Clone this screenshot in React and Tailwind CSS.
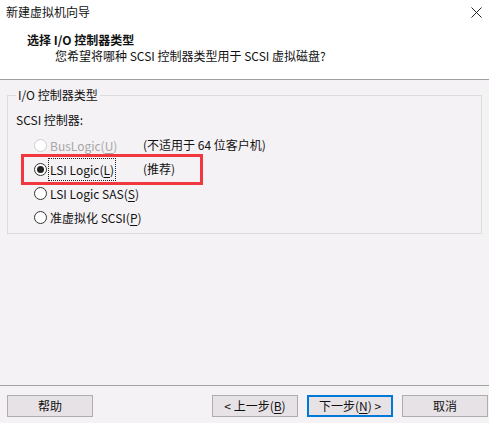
const font = { fontFamily: '"Noto Sans CJK SC", "Noto Sans", sans-serif' };

function Radio({ checked, disabled }) {
  return (
    <span
      className={`flex h-[13px] w-[13px] shrink-0 items-center justify-center rounded-full border bg-white ${
        disabled ? "border-[#cfcfcf]" : "border-[#333333]"
      }`}
    >
      {checked && <span className="h-[7px] w-[7px] rounded-full bg-[#222222]" />}
    </span>
  );
}

function Option({ label, mnemonic, note, checked, disabled, focused }) {
  return (
    <div className="flex h-6 items-center">
      <div className="flex w-[109px] items-center gap-[2px]">
        <Radio checked={checked} disabled={disabled} />
        <span
          className={`whitespace-nowrap px-[1px] leading-[21px] ${
            disabled ? "text-[#a6a6a6]" : "text-[#111111]"
          } ${focused ? "outline outline-1 outline-dotted outline-[#222222]" : ""}`}
        >
          {label}(<span className="underline underline-offset-2">{mnemonic}</span>)
        </span>
      </div>
      {note && <span className="whitespace-nowrap text-[#111111]">{note}</span>}
    </div>
  );
}

function Button({ children, primary }) {
  return (
    <button
      type="button"
      className={`flex h-[22px] w-[86px] items-center justify-center bg-[#e6e2e6] text-[12px] text-[#111111] ${
        primary ? "border-2 border-[#0078d7]" : "border border-[#adadad]"
      }`}
    >
      {children}
    </button>
  );
}

export default function App() {
  return (
    <div
      className="relative flex h-[423px] w-[489px] flex-col bg-[#f5f2f5] text-[12px] text-[#111111]"
      style={font}
    >
      <div className="h-[80px] border-b border-[#a0a0a0] bg-white">
        <div className="flex h-[24px] items-center justify-between pl-[6px] pr-[7px]">
          <span>新建虚拟机向导</span>
          <svg width="11" height="11" viewBox="0 0 11 11" className="text-[#222222]">
            <path d="M0.5 0.5 L10.5 10.5 M10.5 0.5 L0.5 10.5" stroke="currentColor" strokeWidth="1" />
          </svg>
        </div>
        <div className="mt-[7px] pl-[27px] font-bold leading-[17px]">选择 I/O 控制器类型</div>
        <div className="pl-[55px] leading-[16px]">您希望将哪种 SCSI 控制器类型用于 SCSI 虚拟磁盘?</div>
      </div>

      <div className="flex-1 px-[7px] pt-[7px]">
        <fieldset className="h-[147px] border border-[#dcdcdc] px-[8px] pb-2">
          <legend className="px-[2px] leading-[16px]">I/O 控制器类型</legend>
          <div className="mt-[9px] leading-[16px]">SCSI 控制器:</div>
          <div className="mt-[5px] pl-[18px]">
            <Option label="BusLogic" mnemonic="U" note="(不适用于 64 位客户机)" disabled />
            <Option label="LSI Logic" mnemonic="L" note="(推荐)" checked focused />
            <Option label="LSI Logic SAS" mnemonic="S" />
            <Option label="准虚拟化 SCSI" mnemonic="P" />
          </div>
        </fieldset>
      </div>

      <div className="flex h-[38px] items-start border-t border-[#a0a0a0] pl-[7px] pr-[1px] pt-[9px]">
        <Button>帮助</Button>
        <div className="ml-auto flex gap-[9px]">
          <Button>
            &lt; 上一步(<span className="underline underline-offset-2">B</span>)
          </Button>
          <Button primary>
            下一步(<span className="underline underline-offset-2">N</span>) &gt;
          </Button>
          <Button>取消</Button>
        </div>
      </div>

      <div className="pointer-events-none absolute left-[21px] top-[154px] h-[31px] w-[182px] border-[3px] border-[#f0393e]" />
    </div>
  );
}
